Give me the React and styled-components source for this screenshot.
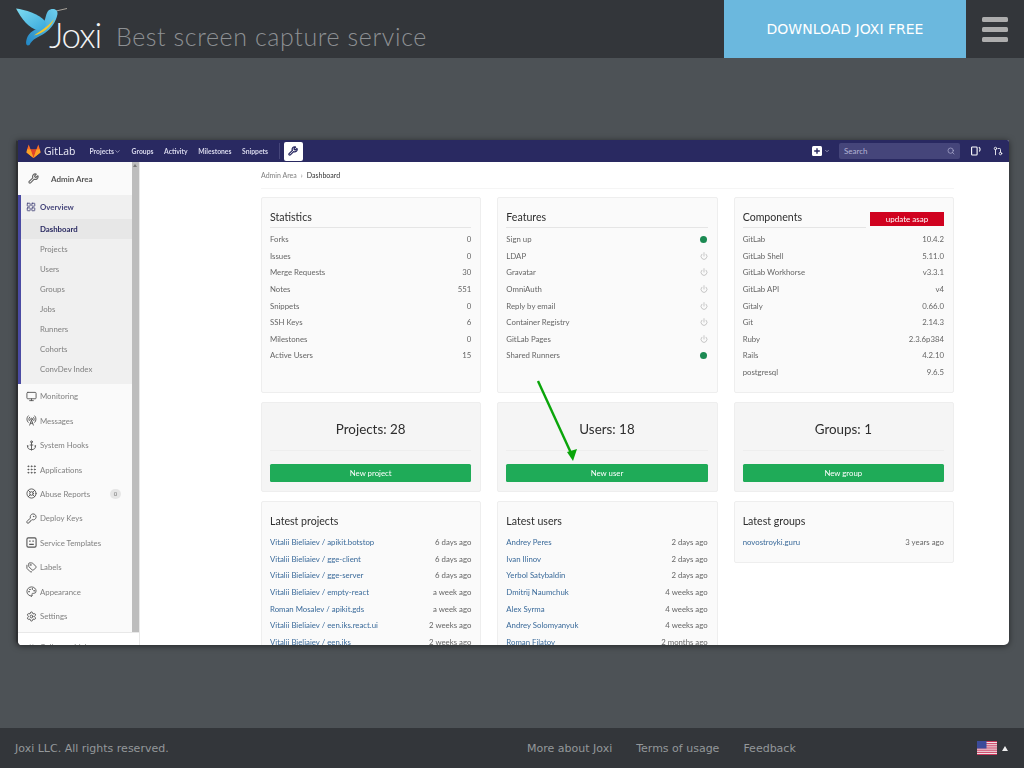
import styled, { createGlobalStyle } from "styled-components";
import {
  Anchor,
  Grip,
  KeyRound,
  LayoutGrid,
  LifeBuoy,
  Monitor,
  Palette,
  Power,
  RadioTower,
  Search,
  Settings,
  Tags,
  ChevronDown,
  Wrench,
  GitPullRequest,
  ChevronsLeft,
} from "lucide-react";

const GlobalStyle = createGlobalStyle`
  html, body {
    margin: 0;
    padding: 0;
    background: #4d5256;
    font-family: "DejaVu Sans", sans-serif;
  }
  * { box-sizing: border-box; }
`;

const Page = styled.div`
  width: 1024px;
  height: 768px;
  display: flex;
  flex-direction: column;
  overflow: hidden;
`;

const Header = styled.header`
  height: 58px;
  background: #33363a;
  display: flex;
  align-items: stretch;
  flex-shrink: 0;
`;

const Brand = styled.div`
  display: flex;
  align-items: flex-start;
  width: 724px;
  padding: 6px 0 0 15px;
`;

const LogoWord = styled.span`
  font-family: Lato, sans-serif;
  font-weight: 300;
  font-size: 35px;
  line-height: 42px;
  letter-spacing: -1.2px;
  color: #f2f3f4;
  margin: 7px 0 0 -20px;
`;

const Tagline = styled.span`
  font-family: Lato, sans-serif;
  font-weight: 300;
  font-size: 25px;
  line-height: 30px;
  letter-spacing: 0.6px;
  color: #8d9093;
  margin: 15px 0 0 15px;
  white-space: nowrap;
`;

const Download = styled.a`
  width: 242px;
  background: #6bb8de;
  color: #fff;
  font-size: 14px;
  display: flex;
  align-items: center;
  justify-content: center;
`;

const Burger = styled.div`
  flex: 1;
  display: flex;
  flex-direction: column;
  align-items: center;
  justify-content: center;
  gap: 5px;
`;

const BurgerBar = styled.span`
  width: 26px;
  height: 5px;
  border-radius: 1.5px;
  background: #adadad;
`;

const Stage = styled.main`
  flex: 1;
  padding: 82px 15px 0 16px;
`;

const Shot = styled.div`
  position: relative;
  width: 993px;
  height: 505px;
  display: flex;
  flex-direction: column;
  overflow: hidden;
  background: #fff;
  border-radius: 2px 2px 5px 5px;
  box-shadow: 0 1px 6px rgba(0, 0, 0, 0.55);
  border-left: 2px solid #2e3033;
  font-family: Lato, sans-serif;
  font-size: 7.8px;
  color: #666;
  filter: blur(0.25px);
`;

const Nav = styled.nav`
  height: 22px;
  flex-shrink: 0;
  background: #292961;
  display: flex;
  align-items: center;
  padding-left: 8px;
  color: #e4e4f2;
`;

const GitLabWord = styled.span`
  font-family: "Open Sans", sans-serif;
  font-size: 10.4px;
  color: #eeeef8;
  margin: 0 14px 0 3px;
`;

const NavLink = styled.span`
  font-size: 6.8px;
  font-weight: 700;
  margin-right: 10.5px;
  display: flex;
  align-items: center;
  color: #d8d8ec;
`;

const NavDivider = styled.span`
  width: 1px;
  height: 16px;
  background: #46467a;
  margin: 0 4px 0 0;
`;

const AdminButton = styled.span`
  width: 19px;
  height: 19px;
  background: #fff;
  border-radius: 2px;
  display: flex;
  align-items: center;
  justify-content: center;
  color: #292961;
`;

const NavRight = styled.div`
  margin-left: auto;
  display: flex;
  align-items: center;
  padding-right: 6px;
  gap: 2px;
`;

const SearchBox = styled.div`
  width: 121px;
  height: 16px;
  margin: 0 9px 0 7px;
  background: #45457a;
  border-radius: 2px;
  display: flex;
  align-items: center;
  justify-content: space-between;
  padding: 0 5px;
  font-size: 8px;
  color: #b4b4d4;
`;

const IssuesIcon = styled.svg`
  margin-right: 10px;
`;

const Body = styled.div`
  flex: 1;
  display: flex;
  min-height: 0;
`;

const Sidebar = styled.aside`
  width: 121px;
  flex-shrink: 0;
  display: flex;
  flex-direction: column;
  background: #fafafa;
  box-shadow: 1px 0 0 #e8e8e8;
`;

const SideScroll = styled.div`
  height: 470px;
  display: flex;
  flex-shrink: 0;
`;

const SideList = styled.div`
  flex: 1;
  min-width: 0;
`;

const Scrollbar = styled.div`
  width: 7px;
  background: #bdbdbd;
  position: relative;
  &::before {
    content: "";
    position: absolute;
    left: 1px;
    top: 2px;
    border: 2.5px solid transparent;
    border-bottom: 3px solid #777;
    border-top: 0;
  }
`;

const AdminHead = styled.div`
  height: 33px;
  display: flex;
  align-items: center;
  padding-left: 10px;
  font-size: 8px;
  font-weight: 700;
  color: #555;
  gap: 12px;
`;

const Overview = styled.div`
  background: #f0f0f0;
  border-left: 3px solid #4b4ba3;
  height: 189px;
`;

const OverviewHead = styled.div`
  height: 24px;
  display: flex;
  align-items: center;
  padding-left: 5px;
  gap: 4px;
  color: #45457a;
  font-weight: 700;
`;

const SubItem = styled.div`
  height: 20px;
  display: flex;
  align-items: center;
  padding-left: 19px;
  color: ${(p) => (p.$active ? "#292961" : "#808080")};
  font-weight: ${(p) => (p.$active ? 700 : 400)};
  background: ${(p) => (p.$active ? "#e7e7e7" : "transparent")};
`;

const SideItem = styled.div`
  height: 24.45px;
  display: flex;
  align-items: center;
  padding-left: 8px;
  gap: 3px;
  color: #808080;
`;

const Badge = styled.span`
  margin-left: auto;
  margin-right: 11px;
  width: 11px;
  height: 10px;
  border-radius: 5px;
  background: #e6e6e6;
  font-size: 6px;
  color: #777;
  text-align: center;
  line-height: 10px;
`;

const Collapse = styled.div`
  flex: 1;
  border-top: 1px solid #e8e8e8;
  background: #fff;
  display: flex;
  align-items: flex-start;
  padding: 9px 0 0 8px;
  gap: 5px;
  color: #808080;
  line-height: 10px;
  overflow: hidden;
`;

const Content = styled.div`
  flex: 1;
  min-width: 0;
  padding-left: 122px;
  overflow: hidden;
`;

const Inner = styled.div`
  width: 693px;
`;

const Crumbs = styled.div`
  height: 27px;
  display: flex;
  align-items: center;
  gap: 4px;
  font-size: 7px;
  color: #808080;
  border-bottom: 1px solid #f5f5f5;
  margin-bottom: 8px;
`;

const CrumbNow = styled.span`
  color: #333;
`;

const Grid = styled.div`
  display: grid;
  grid-template-columns: repeat(3, 1fr);
  column-gap: 16px;
`;

const Stack = styled.div`
  display: flex;
  flex-direction: column;
  gap: 9px;
`;

const Panel = styled.section`
  height: ${(p) => p.$h}px;
  background: #fafafa;
  border: 1px solid #eee;
  border-radius: 2px;
  padding: 0 9px 0 8px;
  flex-shrink: 0;
`;

const PanelHead = styled.div`
  height: ${(p) => (p.$plain ? 29 : 30)}px;
  display: flex;
  align-items: flex-end;
  margin-bottom: 2.7px;
`;

const Title = styled.h3`
  flex: 1;
  margin: 0;
  height: 19px;
  font-size: 10.6px;
  line-height: 16.5px;
  font-weight: 400;
  color: #2e2e2e;
  border-bottom: 1px solid #e5e5e5;
`;

const PlainTitle = styled(Title)`
  flex: none;
  height: 20px;
  line-height: 20px;
  border-bottom: 0;
`;

const UpdateBadge = styled.span`
  width: 74px;
  height: 14px;
  margin: 0 0 2px 4px;
  background: #d0021f;
  color: #fff;
  font-size: 8px;
  line-height: 14px;
  text-align: center;
`;

const Row = styled.div`
  height: 16.65px;
  display: flex;
  align-items: center;
  justify-content: space-between;
  white-space: nowrap;
`;

const LinkText = styled.span`
  color: #3a6a9a;
`;

const OnDot = styled.span`
  width: 7px;
  height: 7px;
  border-radius: 50%;
  margin-right: 0.5px;
  background: #1b8a52;
`;

const CountPanel = styled(Panel)`
  background: #f5f5f5;
  display: flex;
  flex-direction: column;
  padding-top: 18px;
`;

const CountTitle = styled.h2`
  margin: 0;
  height: 30px;
  font-size: 13.4px;
  line-height: 17px;
  font-weight: 400;
  color: #2e2e2e;
  text-align: center;
  border-bottom: 1px solid #eee;
`;

const GreenButton = styled.div`
  margin-top: 13px;
  height: 18px;
  background: #1fab58;
  border-radius: 1.5px;
  color: #fff;
  font-size: 7.8px;
  line-height: 18px;
  text-align: center;
`;

const Arrow = styled.svg`
  position: absolute;
  left: 518px;
  top: 238px;
`;

const Footer = styled.footer`
  height: 40px;
  flex-shrink: 0;
  background: #33363a;
  display: flex;
  align-items: center;
  padding: 0 16px 0 15px;
  font-size: 11px;
  color: #94989b;
`;

const Copy = styled.span`
  width: 512px;
`;

const FootLinks = styled.div`
  display: flex;
  gap: 24px;
`;

const Locale = styled.div`
  margin-left: auto;
  display: flex;
  align-items: center;
  gap: 5px;
`;

const Caret = styled.span`
  border: 3.5px solid transparent;
  border-bottom: 5px solid #eee;
  border-top: 0;
`;

const stats = [
  ["Forks", "0"],
  ["Issues", "0"],
  ["Merge Requests", "30"],
  ["Notes", "551"],
  ["Snippets", "0"],
  ["SSH Keys", "6"],
  ["Milestones", "0"],
  ["Active Users", "15"],
];

const features = [
  ["Sign up", true],
  ["LDAP", false],
  ["Gravatar", false],
  ["OmniAuth", false],
  ["Reply by email", false],
  ["Container Registry", false],
  ["GitLab Pages", false],
  ["Shared Runners", true],
];

const components = [
  ["GitLab", "10.4.2"],
  ["GitLab Shell", "5.11.0"],
  ["GitLab Workhorse", "v3.3.1"],
  ["GitLab API", "v4"],
  ["Gitaly", "0.66.0"],
  ["Git", "2.14.3"],
  ["Ruby", "2.3.6p384"],
  ["Rails", "4.2.10"],
  ["postgresql", "9.6.5"],
];

const projects = [
  ["Vitalii Bieliaiev / apikit.botstop", "6 days ago"],
  ["Vitalii Bieliaiev / gge-client", "6 days ago"],
  ["Vitalii Bieliaiev / gge-server", "6 days ago"],
  ["Vitalii Bieliaiev / empty-react", "a week ago"],
  ["Roman Mosalev / apikit.gds", "a week ago"],
  ["Vitalii Bieliaiev / een.iks.react.ui", "2 weeks ago"],
  ["Vitalii Bieliaiev / een.iks", "2 weeks ago"],
];

const users = [
  ["Andrey Peres", "2 days ago"],
  ["Ivan Ilinov", "2 days ago"],
  ["Yerbol Satybaldin", "2 days ago"],
  ["Dmitrij Naumchuk", "4 weeks ago"],
  ["Alex Syrma", "4 weeks ago"],
  ["Andrey Solomyanyuk", "4 weeks ago"],
  ["Roman Filatov", "2 months ago"],
];

const subItems = ["Dashboard", "Projects", "Users", "Groups", "Jobs", "Runners", "Cohorts", "ConvDev Index"];

function TemplateIcon({ size, color }) {
  return (
    <svg width={size} height={size} viewBox="0 0 12 12" fill="none" stroke={color} strokeWidth="1.200">
      <rect x="1" y="1" width="10" height="10" rx="1.500" />
      <path d="M3.500 4.500h1.500M7 4.500h1.500M3.500 8h5" />
    </svg>
  );
}

const sideItems = [
  ["Monitoring", Monitor],
  ["Messages", RadioTower],
  ["System Hooks", Anchor],
  ["Applications", Grip],
  ["Abuse Reports", LifeBuoy, "0"],
  ["Deploy Keys", KeyRound],
  ["Service Templates", TemplateIcon],
  ["Labels", Tags],
  ["Appearance", Palette],
  ["Settings", Settings],
];

function Bird() {
  return (
    <svg width="54" height="42" viewBox="14 6 54 42">
      <defs>
        <linearGradient id="wing" x1="0" y1="0" x2="1" y2="1">
          <stop offset="0" stopColor="#7fdcf0" />
          <stop offset="1" stopColor="#39a9dc" />
        </linearGradient>
        <linearGradient id="body" x1="1" y1="0" x2="0" y2="1">
          <stop offset="0" stopColor="#6fd0ee" />
          <stop offset="1" stopColor="#2186c4" />
        </linearGradient>
      </defs>
      <path d="M55 11 L66 8.500" stroke="#a9a39a" strokeWidth="1" fill="none" />
      <path
        d="M47 11 C51 7.500 57 9 56.500 14 C55 22 50 29 44 33 C38 37 31 39 28.500 45 C25.500 46.500 24 44 26 38 C28 32 34 30 40 26 C45 22 44 15 47 11 Z"
        fill="url(#body)"
      />
      <path d="M53 19 C50 27 43 33 33 35.500 C39 31 47 27 53 19 Z" fill="#f2c62f" />
      <path
        d="M15 8.500 C24 9.500 38 14 44 21 C46.500 25 43 30 37 30 C28 29 20 18 15 8.500 Z"
        fill="url(#wing)"
      />
    </svg>
  );
}

function Fox() {
  return (
    <svg width="15" height="14" viewBox="0 0 14 13">
      <path d="M7 13 L0.500 8 L1 5 L2.500 0.500 L4.300 5 L9.700 5 L11.500 0.500 L13 5 L13.500 8 Z" fill="#fc6d26" />
      <path d="M7 13 L4.300 5 L9.700 5 Z" fill="#e24329" />
      <path d="M0.500 8 L1 5 L4.300 5 L7 13 Z" fill="#fca326" />
      <path d="M13.500 8 L13 5 L9.700 5 L7 13 Z" fill="#fca326" />
    </svg>
  );
}

function PlusBox() {
  return (
    <svg width="10" height="10" viewBox="0 0 10 10">
      <rect width="10" height="10" rx="1.500" fill="#fff" />
      <path d="M5 2.200v5.600M2.200 5h5.600" stroke="#292961" strokeWidth="1.400" />
    </svg>
  );
}

function Flag() {
  return (
    <svg width="20" height="14" viewBox="0 0 20 14">
      <rect width="20" height="14" fill="#f4f4f4" />
      {[0, 2.15, 4.3, 6.45, 8.6, 10.75, 12.9].map((y) => (
        <rect key={y} y={y} width="20" height="1.1" fill="#c8365a" />
      ))}
      <rect width="9.500" height="7.500" fill="#3c4b9a" />
    </svg>
  );
}

function ListRows({ rows }) {
  return rows.map(([name, when]) => (
    <Row key={name}>
      <LinkText>{name}</LinkText>
      <span>{when}</span>
    </Row>
  ));
}

export default function App() {
  return (
    <Page>
      <GlobalStyle />
      <Header>
        <Brand>
          <Bird />
          <LogoWord>Joxi</LogoWord>
          <Tagline>Best screen capture service</Tagline>
        </Brand>
        <Download>DOWNLOAD JOXI FREE</Download>
        <Burger>
          <BurgerBar />
          <BurgerBar />
          <BurgerBar />
        </Burger>
      </Header>

      <Stage>
        <Shot>
          <Nav>
            <Fox />
            <GitLabWord>GitLab</GitLabWord>
            <NavLink>
              Projects <ChevronDown size={7} />
            </NavLink>
            <NavLink>Groups</NavLink>
            <NavLink>Activity</NavLink>
            <NavLink>Milestones</NavLink>
            <NavLink>Snippets</NavLink>
            <NavDivider />
            <AdminButton>
              <Wrench size={10} strokeWidth={3} />
            </AdminButton>
            <NavRight>
              <PlusBox />
              <ChevronDown size={6} />
              <SearchBox>
                Search
                <Search size={8} />
              </SearchBox>
              <IssuesIcon width="10" height="10" viewBox="0 0 10 10" fill="none" stroke="#fff" strokeWidth="1.100">
                <rect x="0.600" y="1" width="5.500" height="8" rx="0.800" />
                <path d="M7.800 1.200 C9.400 2 9.400 4 8.300 5.500" />
              </IssuesIcon>
              <GitPullRequest size={10} color="#fff" />
            </NavRight>
          </Nav>

          <Body>
            <Sidebar>
              <SideScroll>
                <SideList>
                  <AdminHead>
                    <Wrench size={11} color="#666" strokeWidth={2.500} />
                    Admin Area
                  </AdminHead>
                  <Overview>
                    <OverviewHead>
                      <LayoutGrid size={10} />
                      Overview
                    </OverviewHead>
                    {subItems.map((item, i) => (
                      <SubItem key={item} $active={i === 0}>
                        {item}
                      </SubItem>
                    ))}
                  </Overview>
                  <div>
                    {sideItems.map(([label, Icon, count]) => (
                      <SideItem key={label}>
                        <Icon size={11} color="#555" />
                        {label}
                        {count && <Badge>{count}</Badge>}
                      </SideItem>
                    ))}
                  </div>
                </SideList>
                <Scrollbar />
              </SideScroll>
              <Collapse>
                <ChevronsLeft size={9} />
                Collapse sidebar
              </Collapse>
            </Sidebar>

            <Content>
              <Inner>
                <Crumbs>
                  Admin Area <span>›</span> <CrumbNow>Dashboard</CrumbNow>
                </Crumbs>
                <Stack>
                  <Grid>
                    <Panel $h={196}>
                      <PanelHead>
                        <Title>Statistics</Title>
                      </PanelHead>
                      {stats.map(([name, value]) => (
                        <Row key={name}>
                          <span>{name}</span>
                          <span>{value}</span>
                        </Row>
                      ))}
                    </Panel>
                    <Panel $h={196}>
                      <PanelHead>
                        <Title>Features</Title>
                      </PanelHead>
                      {features.map(([name, on]) => (
                        <Row key={name}>
                          <span>{name}</span>
                          {on ? <OnDot /> : <Power size={8} color="#bdbdbd" strokeWidth={2.500} />}
                        </Row>
                      ))}
                    </Panel>
                    <Panel $h={196}>
                      <PanelHead>
                        <Title>Components</Title>
                        <UpdateBadge>update asap</UpdateBadge>
                      </PanelHead>
                      {components.map(([name, value]) => (
                        <Row key={name}>
                          <span>{name}</span>
                          <span>{value}</span>
                        </Row>
                      ))}
                    </Panel>
                  </Grid>
                  <Grid>
                    <CountPanel $h={90}>
                      <CountTitle>Projects: 28</CountTitle>
                      <GreenButton>New project</GreenButton>
                    </CountPanel>
                    <CountPanel $h={90}>
                      <CountTitle>Users: 18</CountTitle>
                      <GreenButton>New user</GreenButton>
                    </CountPanel>
                    <CountPanel $h={90}>
                      <CountTitle>Groups: 1</CountTitle>
                      <GreenButton>New group</GreenButton>
                    </CountPanel>
                  </Grid>
                  <Grid>
                    <Panel $h={170}>
                      <PanelHead $plain>
                        <PlainTitle>Latest projects</PlainTitle>
                      </PanelHead>
                      <ListRows rows={projects} />
                    </Panel>
                    <Panel $h={170}>
                      <PanelHead $plain>
                        <PlainTitle>Latest users</PlainTitle>
                      </PanelHead>
                      <ListRows rows={users} />
                    </Panel>
                    <Panel $h={62}>
                      <PanelHead $plain>
                        <PlainTitle>Latest groups</PlainTitle>
                      </PanelHead>
                      <ListRows rows={[["novostroyki.guru", "3 years ago"]]} />
                    </Panel>
                  </Grid>
                </Stack>
              </Inner>
            </Content>
          </Body>

          <Arrow width="50" height="90" viewBox="0 0 50 90">
            <path d="M2 3 L35 75" stroke="#0aa50a" strokeWidth="2.400" fill="none" />
            <path d="M37 83 L31 74 L41 71 Z" fill="#0aa50a" />
          </Arrow>
        </Shot>
      </Stage>

      <Footer>
        <Copy>Joxi LLC. All rights reserved.</Copy>
        <FootLinks>
          <span>More about Joxi</span>
          <span>Terms of usage</span>
          <span>Feedback</span>
        </FootLinks>
        <Locale>
          <Flag />
          <Caret />
        </Locale>
      </Footer>
    </Page>
  );
}
